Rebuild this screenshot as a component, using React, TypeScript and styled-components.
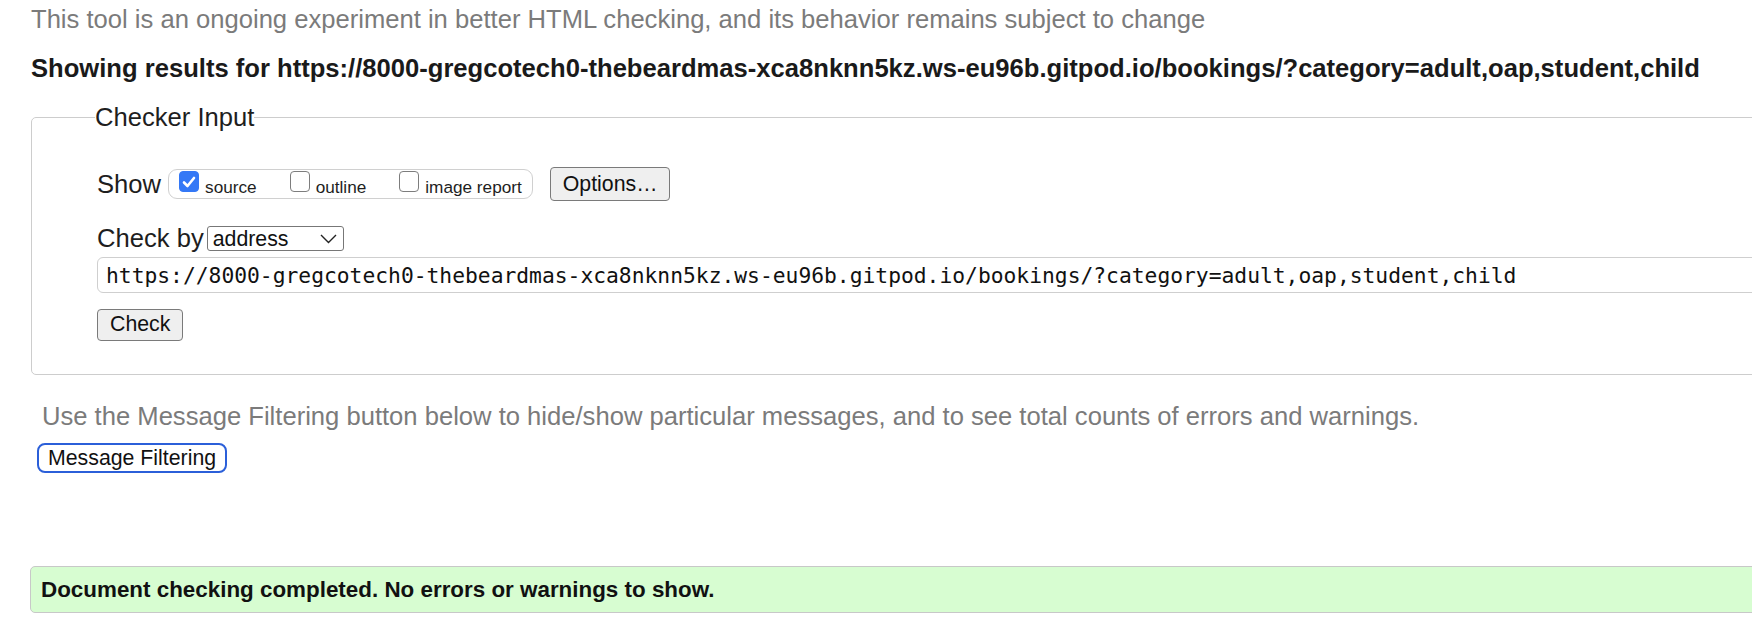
import styled, { createGlobalStyle } from 'styled-components';

const GlobalStyle = createGlobalStyle`
  html, body {
    margin: 0;
    padding: 0;
    overflow: hidden;
    background: #ffffff;
  }
  body {
    font-family: "Liberation Sans", Arial, Helvetica, sans-serif;
    font-size: 25.6px;
    color: #1c1c1c;
  }
`;

const StyledPage = styled.div`
  width: 2100px;
  padding: 4px 0 0 31px;
`;

const StyledNote = styled.p<{ $indent?: number }>`
  margin: 0;
  margin-left: ${({ $indent }) => $indent ?? 0}px;
  line-height: 30px;
  color: #7b7b7b;
`;

const StyledHeading = styled.h2`
  margin: 19px 0 0;
  font-size: 25.6px;
  line-height: 30px;
  font-weight: bold;
  color: #1a1a1a;
`;

const StyledFieldset = styled.fieldset`
  margin: 19px 0 0;
  width: 1900px;
  padding: 0 0 33px 65px;
  border: 1px solid #cdcdcd;
  border-radius: 5px;
`;

const StyledLegend = styled.legend`
  margin-left: -2px;
  padding: 0;
  line-height: 30px;
  color: #1e1e1e;
`;

const StyledRow = styled.div<{ $top: number }>`
  display: flex;
  align-items: center;
  margin-top: ${({ $top }) => $top}px;
`;

const StyledRowLabel = styled.span<{ $gap: number }>`
  line-height: 25px;
  margin-right: ${({ $gap }) => $gap}px;
  color: #1e1e1e;
`;

const StyledPill = styled.div`
  display: flex;
  align-items: center;
  height: 28px;
  padding: 0 10px;
  border: 1px solid #d0d0d0;
  border-radius: 9px;
`;

const StyledOption = styled.label<{ $gap: number }>`
  display: flex;
  align-items: center;
  margin-right: ${({ $gap }) => $gap}px;
`;

const StyledBox = styled.span<{ $checked: boolean }>`
  display: flex;
  align-items: center;
  justify-content: center;
  box-sizing: border-box;
  width: 20px;
  height: 21px;
  margin-bottom: 5px;
  border-radius: 4px;
  border: 1.5px solid ${({ $checked }) => ($checked ? '#3478f6' : '#7d7d7d')};
  background: ${({ $checked }) => ($checked ? '#3478f6' : '#ffffff')};
`;

const StyledOptionText = styled.span`
  margin: 5px 0 0 6px;
  font-size: 17.2px;
  line-height: 20px;
  color: #1e1e1e;
`;

const StyledButton = styled.button<{ $h: number; $focus?: boolean }>`
  height: ${({ $h }) => $h}px;
  margin-left: ${({ $focus }) => ($focus ? 6 : 0)}px;
  padding: 0 ${({ $focus }) => ($focus ? 9 : 12)}px;
  font-family: "Liberation Sans", Arial, Helvetica, sans-serif;
  font-size: 21.3px;
  color: #111111;
  background: ${({ $focus }) => ($focus ? '#ffffff' : '#efefef')};
  border: ${({ $focus }) => ($focus ? '2px solid #2b5fd9' : '1px solid #7a7a7a')};
  border-radius: ${({ $focus }) => ($focus ? 8 : 4)}px;
`;

const StyledSelectWrap = styled.span`
  position: relative;
  display: inline-flex;
`;

const StyledSelect = styled.select`
  appearance: none;
  width: 137px;
  height: 25px;
  padding: 0 0 0 5px;
  font-family: "Liberation Sans", Arial, Helvetica, sans-serif;
  font-size: 21.3px;
  color: #111111;
  background: #ffffff;
  border: 1px solid #777777;
  border-radius: 3px;
`;

const StyledChevron = styled.svg`
  position: absolute;
  right: 7px;
  top: 8px;
  pointer-events: none;
`;

const StyledUrlInput = styled.input`
  display: block;
  box-sizing: border-box;
  width: 1800px;
  height: 36px;
  margin-top: 6px;
  padding: 0 8px;
  font-family: "DejaVu Sans Mono", "Liberation Mono", monospace;
  font-size: 21.3px;
  color: #111111;
  border: 1px solid #cfcfcf;
  border-radius: 6px;
`;

const StyledBlock = styled.div<{ $top: number; $left?: number }>`
  margin-top: ${({ $top }) => $top}px;
  margin-left: ${({ $left }) => $left ?? 0}px;
`;

const StyledSuccess = styled.div`
  width: 1900px;
  margin: 93px 0 0 -1px;
  padding: 10px 10px;
  line-height: 25px;
  font-size: 22.4px;
  font-weight: bold;
  color: #111111;
  background: #d7fdd1;
  border: 1px solid #c8c8c8;
  border-radius: 5px;
`;

function CheckBox({ checked }: { checked: boolean }) {
  return (
    <StyledBox $checked={checked}>
      {checked && (
        <svg width="14" height="14" viewBox="0 0 14 14">
          <path d="M2 7.5 L5.5 11 L12 3" fill="none" stroke="#ffffff" strokeWidth="2.6" strokeLinecap="round" strokeLinejoin="round" />
        </svg>
      )}
    </StyledBox>
  );
}

const url = 'https://8000-gregcotech0-thebeardmas-xca8nknn5kz.ws-eu96b.gitpod.io/bookings/?category=adult,oap,student,child';

function App() {
  return (
    <>
      <GlobalStyle />
      <StyledPage>
        <StyledNote>This tool is an ongoing experiment in better HTML checking, and its behavior remains subject to change</StyledNote>
        <StyledHeading>Showing results for {url}</StyledHeading>
        <StyledFieldset>
          <StyledLegend>Checker Input</StyledLegend>
          <StyledRow $top={35}>
            <StyledRowLabel $gap={7}>Show</StyledRowLabel>
            <StyledPill>
              <StyledOption $gap={33}>
                <CheckBox checked />
                <StyledOptionText>source</StyledOptionText>
              </StyledOption>
              <StyledOption $gap={33}>
                <CheckBox checked={false} />
                <StyledOptionText>outline</StyledOptionText>
              </StyledOption>
              <StyledOption $gap={0}>
                <CheckBox checked={false} />
                <StyledOptionText>image report</StyledOptionText>
              </StyledOption>
            </StyledPill>
            <StyledBlock $top={0} $left={17}>
              <StyledButton $h={34}>Options…</StyledButton>
            </StyledBlock>
          </StyledRow>
          <StyledRow $top={25}>
            <StyledRowLabel $gap={3}>Check by</StyledRowLabel>
            <StyledSelectWrap>
              <StyledSelect defaultValue="address">
                <option value="address">address</option>
                <option value="file">file upload</option>
                <option value="text">text input</option>
              </StyledSelect>
              <StyledChevron width="17" height="10" viewBox="0 0 17 10">
                <path d="M1 1 L8.5 8.5 L16 1" fill="none" stroke="#222222" strokeWidth="1.4" />
              </StyledChevron>
            </StyledSelectWrap>
          </StyledRow>
          <StyledUrlInput readOnly value={url} />
          <StyledBlock $top={15}>
            <StyledButton $h={32}>Check</StyledButton>
          </StyledBlock>
        </StyledFieldset>
        <StyledBlock $top={26}>
          <StyledNote $indent={11}>
            Use the Message Filtering button below to hide/show particular messages, and to see total counts of errors and warnings.
          </StyledNote>
        </StyledBlock>
        <StyledBlock $top={11}>
          <StyledButton $h={30} $focus>Message Filtering</StyledButton>
        </StyledBlock>
        <StyledSuccess>Document checking completed. No errors or warnings to show.</StyledSuccess>
      </StyledPage>
    </>
  );
}

export default App;
